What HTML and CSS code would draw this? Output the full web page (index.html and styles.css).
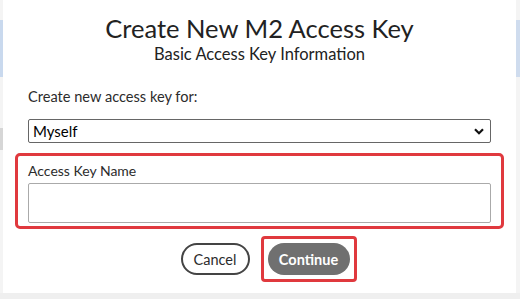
FILE: index.html
```html
<!DOCTYPE html>
<html>
	<head>
		<meta charset="UTF-8">
		<title>Create New M2 Access Key</title>
		<link rel="stylesheet" href="styles.css">
	</head>
	<body>
		<div class="page">
			<div class="strip strip-left"></div>
			<div class="dialog">
				<div class="head">
					<h1 class="title">Create New M2 Access Key</h1>
					<h2 class="subtitle">Basic Access Key Information</h2>
				</div>
				<div class="field">
					<label class="label-for">Create new access key for:</label>
					<div class="select">
						<span>Myself</span>
						<svg class="chevron" width="10" height="7" viewBox="0 0 10 7"><path d="M1 1.2 L5 5.2 L9 1.2" fill="none" stroke="#111" stroke-width="2.2"/></svg>
					</div>
				</div>
				<div class="highlight name-box">
					<label class="label-name">Access Key Name</label>
					<div class="input"></div>
				</div>
				<div class="buttons">
					<button class="btn btn-cancel">Cancel</button>
					<div class="highlight btn-wrap">
						<button class="btn btn-continue">Continue</button>
					</div>
				</div>
			</div>
			<div class="strip strip-right"></div>
		</div>
	</body>
</html>
```

FILE: styles.css
```css
body{
	margin: 0;
	background: #efefef;
	font-family: Lato, "Open Sans", sans-serif;
	color: #2c2c2c;
}
.page{
	display: flex;
	height: 299px;
}
.strip{
	height: 293px;
	background: #f4f4f4;
}
.strip-left{
	width: 3px;
	background: linear-gradient(#f4f4f4 20px, #c9d9ee 20px, #c9d9ee 77px, #f4f4f4 77px, #f4f4f4 128px, #d6d6d6 128px, #d6d6d6 150px, #f4f4f4 150px);
}
.strip-right{
	width: 4px;
	background: linear-gradient(#f4f4f4 20px, #cfdcee 20px, #cfdcee 77px, #f4f4f4 77px);
}
.dialog{
	width: 513px;
	height: 293px;
	background: #fff;
	box-sizing: border-box;
	padding: 13px 25px 0 25px;
	display: flex;
	flex-direction: column;
}
.head{
	text-align: center;
}
.title{
	margin: 0;
	font-size: 25.5px;
	font-weight: 400;
	line-height: 31px;
	color: #222;
}
.subtitle{
	margin: 0;
	font-size: 16.5px;
	font-weight: 400;
	line-height: 20px;
	color: #222;
}
.field{
	margin-top: 23px;
	display: flex;
	flex-direction: column;
}
.label-for{
	font-size: 14.6px;
	line-height: 20px;
}
.select{
	margin-top: 12px;
	height: 24px;
	box-sizing: border-box;
	border: 1px solid #666;
	border-radius: 2px;
	display: flex;
	align-items: center;
	justify-content: space-between;
	padding: 0 6px 0 4px;
	font-size: 15px;
	color: #000;
}
.highlight{
	border: 3px solid #e0393e;
	border-radius: 5px;
}
.name-box{
	margin: 10px -13px 0 -13px;
	height: 76px;
	box-sizing: border-box;
	padding: 6px 10px 0 10px;
	display: flex;
	flex-direction: column;
}
.label-name{
	font-size: 14px;
	line-height: 18px;
}
.input{
	margin-top: 3px;
	height: 40px;
	box-sizing: border-box;
	border: 1px solid #aaa;
	border-radius: 2px;
}
.buttons{
	margin-top: 7px;
	display: flex;
	justify-content: center;
	align-items: center;
	gap: 11px;
	padding-left: 18px;
}
.btn{
	font-family: inherit;
	font-size: 14.5px;
	height: 32px;
	border-radius: 16px;
	cursor: pointer;
}
.btn-cancel{
	width: 69px;
	background: #fff;
	border: 2px solid #444;
	color: #2c2c2c;
}
.btn-wrap{
	padding: 4px;
	border-radius: 4px;
}
.btn-continue{
	width: 82px;
	border: none;
	background: #707070;
	color: #fff;
	font-weight: 700;
}
```
